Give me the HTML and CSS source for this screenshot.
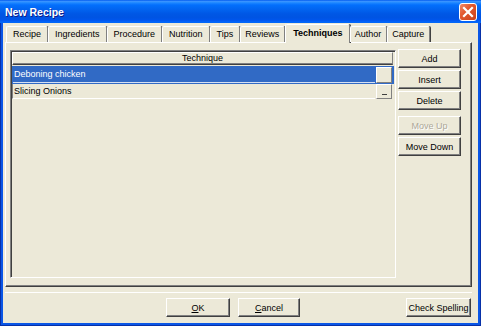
FILE: index.html
```html
<!DOCTYPE html>
<html lang="en">
<head>
<meta charset="UTF-8">
<title>New Recipe</title>
<link rel="stylesheet" href="styles.css">
</head>
<body>

<div class="window">
  <div class="titlebar">
    <span class="title">New Recipe</span>
    <span class="close">
      <svg width="16" height="16" viewBox="0 0 16 16">
        <path d="M4 4 L12 12 M12 4 L4 12" stroke="#fff" stroke-width="2.2" stroke-linecap="square"/>
      </svg>
    </span>
  </div>

  <div class="client">
    <div class="tabs">
      <span class="tab">Recipe</span>
      <span class="tab">Ingredients</span>
      <span class="tab">Procedure</span>
      <span class="tab">Nutrition</span>
      <span class="tab">Tips</span>
      <span class="tab tight">Reviews</span>
      <span class="tab active">Techniques</span>
      <span class="tab tight">Author</span>
      <span class="tab tight">Capture</span>
    </div>

    <div class="panel">
      <div class="grid">
        <div class="grid-head">Technique</div>
        <div class="row sel">
          <span class="cell">Deboning chicken</span>
          <span class="dots"></span>
        </div>
        <div class="row">
          <span class="cell">Slicing Onions</span>
          <span class="dots"><i class="ellipsis"></i></span>
        </div>
      </div>

      <div class="side">
        <button class="btn">Add</button>
        <button class="btn">Insert</button>
        <button class="btn">Delete</button>
        <button class="btn disabled gap">Move Up</button>
        <button class="btn">Move Down</button>
      </div>
    </div>

    <div class="sep"></div>

    <div class="footer">
      <button class="btn wide"><u>O</u>K</button>
      <button class="btn wide cancel"><u>C</u>ancel</button>
      <button class="btn wide spell">Check Spelling</button>
    </div>
  </div>
</div>

</body>
</html>
```

FILE: styles.css
```css
body {
  margin: 0;
  font-family: "Liberation Sans", Arial, sans-serif;
  font-size: 9px;
  color: #000;
}

.window {
  width: 481px;
  height: 326px;
  display: flex;
  flex-direction: column;
  background: #0a56e6;
  box-shadow: inset 1px 0 #0831a8, inset -1px 0 #0831a8, inset 0 -1px #0831a8;
}

.titlebar {
  height: 23px;
  flex: none;
  display: flex;
  align-items: center;
  padding: 1px 4px 0 5px;
  box-sizing: border-box;
  background: linear-gradient(to bottom, #0058ee 0%, #3a93ff 6%, #288eff 10%, #127dff 16%, #036ffc 22%, #0262ee 44%, #0057e5 60%, #0054e3 76%, #0055eb 86%, #005bf5 92%, #026afe 96%, #0062ef 100%);
}

.title {
  flex: 1;
  color: #fff;
  font-size: 10.5px;
  font-weight: bold;
  text-shadow: 1px 1px #0f1d8a;
}

.close {
  width: 18px;
  height: 18px;
  box-sizing: border-box;
  border: 1px solid #fff;
  border-radius: 3px;
  background: linear-gradient(135deg, #f08a6a 0%, #e2592f 40%, #c8401a 100%);
  display: flex;
  align-items: center;
  justify-content: center;
}

.client {
  flex: 1;
  margin: 0 3px 3px;
  background: #ece9d8;
  display: flex;
  flex-direction: column;
  padding: 1px 6px 0 2px;
}

.tabs {
  display: flex;
  align-items: flex-end;
  height: 19px;
  padding-left: 1px;
  position: relative;
  z-index: 2;
}

.tab {
  height: 16px;
  line-height: 15px;
  margin-bottom: 1px;
  padding: 0 6px;
  box-sizing: border-box;
  border: 1px solid;
  border-color: #fff #808080 transparent #fff;
  border-bottom: none;
  border-radius: 2px 2px 0 0;
  box-shadow: 1px 0 #404040;
  background: #ece9d8;
  white-space: nowrap;
}

.tab.tight {
  padding: 0 5px 0 4px;
}

.tab.active {
  height: 19px;
  margin-bottom: 0;
  line-height: 16px;
  padding: 0 6px 0 7px;
  font-weight: bold;
}

.panel {
  height: 245px;
  flex: none;
  margin-top: -1px;
  box-sizing: border-box;
  border: 1px solid;
  border-color: #fff #404040 #404040 #fff;
  box-shadow: inset -1px -1px #808080;
  display: flex;
  align-items: flex-start;
  gap: 2px;
  padding: 6px 10px 0 4px;
  position: relative;
  z-index: 1;
}

.grid {
  width: 386px;
  height: 228px;
  margin-top: 1px;
  box-sizing: border-box;
  border: 1px solid;
  border-color: #808080 #fff #fff #808080;
  box-shadow: inset 1px 1px #404040;
  padding: 1px 0 0 1px;
}

.grid-head {
  width: 381px;
  height: 13px;
  box-sizing: border-box;
  border: 1px solid;
  border-color: #fff #808080 #404040 #fff;
  box-shadow: inset 0 -1px #808080;
  text-align: center;
  line-height: 10px;
}

.row {
  display: flex;
  width: 382px;
  box-sizing: border-box;
}

.row.sel {
  height: 18px;
  margin-top: 1px;
  padding: 1px 2px 1px 1px;
  background: #316ac5;
  color: #fff;
}

.row .cell {
  flex: 1;
  padding-left: 1px;
  line-height: 14px;
  border-left: 1px solid #808080;
  border-bottom: 1px solid #fff;
}

.row.sel .cell {
  border-left: none;
  border-bottom-color: #d6e0f3;
  padding-left: 1px;
  line-height: 15px;
}

.row:not(.sel) {
  height: 15px;
  padding-right: 2px;
}

.dots {
  width: 16px;
  margin-left: 1px;
  box-sizing: border-box;
  border: 1px solid;
  border-color: #fff #808080 #808080 #fff;
  background: #ece9d8;
  display: flex;
  justify-content: center;
  align-items: flex-end;
}

.ellipsis {
  width: 5px;
  height: 0;
  border-bottom: 1px solid #404040;
  margin-bottom: 3px;
}

.side {
  width: 63px;
  display: flex;
  flex-direction: column;
  gap: 2px;
}

.btn {
  height: 19px;
  box-sizing: border-box;
  padding: 0;
  background: #ece9d8;
  border: 1px solid;
  border-color: #fff #404040 #404040 #fff;
  box-shadow: inset -1px -1px #808080;
  font-family: inherit;
  font-size: 9px;
  color: #000;
}

.btn.gap {
  margin-top: 4px;
}

.btn.disabled {
  color: #aca899;
  text-shadow: 1px 1px #fff;
}

.sep {
  margin-top: 5px;
  border-top: 1px solid #fff;
}

.footer {
  display: flex;
  margin-top: 5px;
  padding-left: 161px;
}

.btn.wide {
  width: 64px;
}

.btn.cancel {
  margin-left: 8px;
  width: 62px;
}

.btn.spell {
  width: 65px;
  margin-left: auto;
  margin-right: 1px;
}
```
